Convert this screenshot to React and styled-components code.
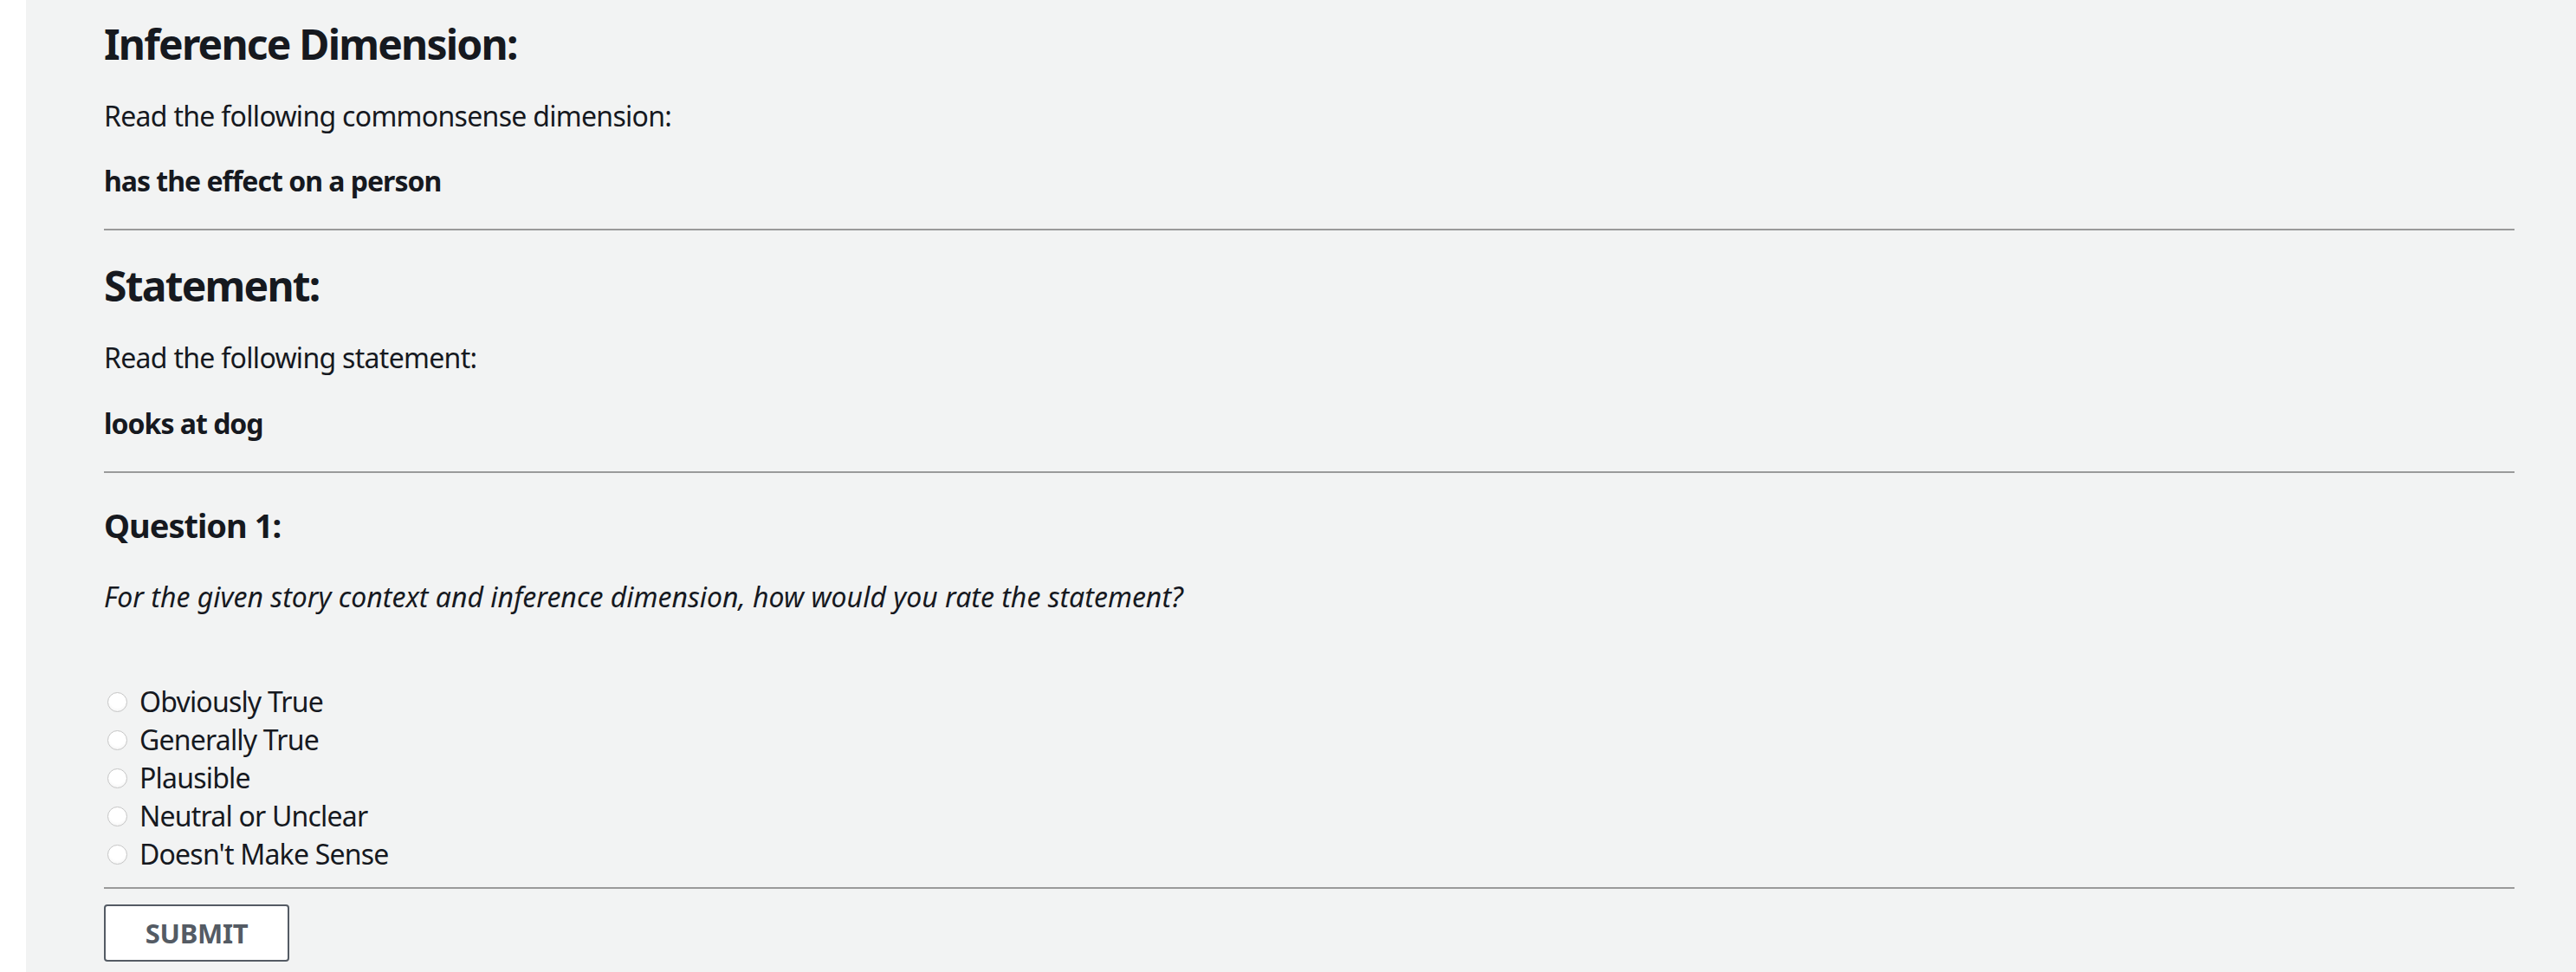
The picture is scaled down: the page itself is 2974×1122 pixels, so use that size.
import React from "react";
import styled, { createGlobalStyle } from "styled-components";

const GlobalStyle = createGlobalStyle`
  html, body {
    margin: 0;
    padding: 0;
    background: #ffffff;
  }
  body {
    font-family: "Noto Sans", "Open Sans", sans-serif;
    color: #16191f;
  }
`;

const options = [
  "Obviously True",
  "Generally True",
  "Plausible",
  "Neutral or Unclear",
  "Doesn't Make Sense",
];

const App = () => {
  return (
    <>
      <GlobalStyle />
      <Page>
        <Sheet>
          <Heading>Inference Dimension:</Heading>
          <Text gap={31}>Read the following commonsense dimension:</Text>
          <Text gap={31} bold>has the effect on a person</Text>
          <Rule gap={33} />
          <Heading gap={34}>Statement:</Heading>
          <Text gap={31}>Read the following statement:</Text>
          <Text gap={32} bold>looks at dog</Text>
          <Rule gap={33} />
          <Question>Question 1:</Question>
          <Text gap={36} italic>
            For the given story context and inference dimension, how would you rate the statement?
          </Text>
          <Choices>
            {options.map((option, index) => (
              <Choice key={index}>
                <Radio type="radio" name="rating" value={option} />
                <span>{option}</span>
              </Choice>
            ))}
          </Choices>
          <Rule gap={16} />
          <SubmitButton type="button">SUBMIT</SubmitButton>
          <Text gap={10}>&nbsp;</Text>
        </Sheet>
      </Page>
    </>
  );
};

const Page = styled.div`
  width: 2974px;
  min-height: 1122px;
  display: flex;
  padding-left: 30px;
  box-sizing: border-box;
`;

const Sheet = styled.div`
  flex: 1;
  background-color: #f2f3f3;
  padding: 21px 71px 40px 90px;
  display: flex;
  flex-direction: column;
  align-items: flex-start;
`;

const Heading = styled.h1`
  margin: ${(p) => p.gap || 0}px 0 0;
  font-size: 48px;
  line-height: 60px;
  font-weight: 700;
  letter-spacing: -1.8px;
`;

const Question = styled.h3`
  margin: 35px 0 0;
  font-size: 38px;
  line-height: 50px;
  font-weight: 700;
  letter-spacing: -1px;
`;

const Text = styled.p`
  margin: ${(p) => p.gap || 0}px 0 0;
  font-size: 32px;
  line-height: 44px;
  font-weight: ${(p) => (p.bold ? 700 : 400)};
  font-style: ${(p) => (p.italic ? "italic" : "normal")};
  letter-spacing: ${(p) => (p.bold ? -1 : p.italic ? 0 : -0.7)}px;
`;

const Rule = styled.hr`
  align-self: stretch;
  margin: ${(p) => p.gap || 0}px 0 0;
  height: 0;
  border: none;
  border-top: 2px solid #9a9a9a;
`;

const Choices = styled.div`
  margin-top: 77px;
  display: flex;
  flex-direction: column;
`;

const Choice = styled.label`
  display: flex;
  align-items: center;
  font-size: 32px;
  line-height: 44px;
  letter-spacing: -0.8px;
  & > span {
    margin-left: 14px;
  }
`;

const Radio = styled.input`
  appearance: none;
  width: 23px;
  height: 23px;
  margin: 0 0 0 4px;
  border-radius: 50%;
  border: 1px solid #c6c6c6;
  background: radial-gradient(circle at 50% 35%, #ffffff 55%, #ededed 100%);
  box-sizing: border-box;
`;

const SubmitButton = styled.button`
  margin-top: 18px;
  width: 214px;
  height: 66px;
  border: 2px solid #545b64;
  border-radius: 4px;
  background-color: #ffffff;
  color: #545b64;
  font-family: "Noto Sans", "Open Sans", sans-serif;
  font-size: 31px;
  font-weight: 700;
  letter-spacing: -0.3px;
  cursor: pointer;
`;

export default App;
